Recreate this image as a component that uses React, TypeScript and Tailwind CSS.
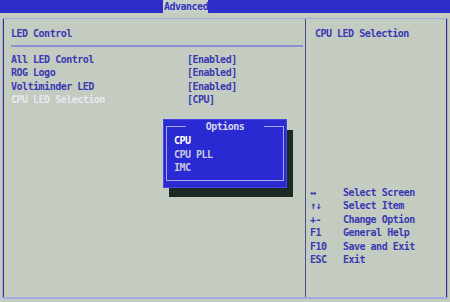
const items = [
  { label: "All LED Control", value: "[Enabled]" },
  { label: "ROG Logo", value: "[Enabled]" },
  { label: "Voltiminder LED", value: "[Enabled]" },
];

const help = [
  { key: "↔", desc: "Select Screen" },
  { key: "↑↓", desc: "Select Item" },
  { key: "+-", desc: "Change Option" },
  { key: "F1", desc: "General Help" },
  { key: "F10", desc: "Save and Exit" },
  { key: "ESC", desc: "Exit" },
];

export default function App() {
  return (
    <div
      className="relative w-[450px] h-[302px] overflow-hidden bg-[#c4cbc0] text-[10px] font-bold tracking-[-0.5px] text-[#3a3ab4]"
      style={{ fontFamily: '"DejaVu Sans Mono", "Liberation Mono", monospace' }}
    >
      {/* Top menu bar */}
      <div className="flex h-[13px] bg-[#2c2cc8]">
        <div className="ml-[163px] w-[45px] bg-[#c8cfc6] text-[#3434c0] leading-[13px] pl-[1px]">Advanced</div>
      </div>

      {/* Main frame */}
      <div className="mt-[5px] mx-[2px] h-[281px] border-t border-x border-b-2 border-[#a6aadc]">
        <div className="flex h-full border-x border-[#32327a]">
          {/* Left panel */}
          <div className="w-[302px] pl-[7px] pt-[8px] border-r border-[#4a4e7e]">
            <div className="leading-[13px]">LED Control</div>
            <div className="mt-[5px] mr-[2px] h-[2px] bg-[#8c8ed8]" />
            <div className="mt-[6px] leading-[13.4px]">
              {items.map((it) => (
                <div key={it.label} className="flex">
                  <span className="w-[176px]">{it.label}</span>
                  <span>{it.value}</span>
                </div>
              ))}
              <div className="flex">
                <span className="w-[176px] text-[#e6e8ee]">CPU LED Selection</span>
                <span>[CPU]</span>
              </div>
            </div>
          </div>

          {/* Right panel */}
          <div className="flex-1 flex flex-col pt-[8px]">
            <div className="pl-[9px] leading-[13px]">CPU LED Selection</div>
            <div className="mt-[146px] pl-[4px] leading-[13.4px]">
              {help.map((h) => (
                <div key={h.desc} className="flex">
                  <span className="w-[33px]">{h.key}</span>
                  <span>{h.desc}</span>
                </div>
              ))}
            </div>
          </div>
        </div>
      </div>

      {/* Options popup */}
      <div className="absolute left-[169px] top-[130px] w-[124px] h-[67px] bg-[#1e2a24]" />
      <div className="absolute left-[163px] top-[119px] w-[124px] h-[69px] bg-[#2a2ad2] border border-[#4848e0]">
        <div className="relative mt-[6px] mx-[2px] h-[55px] border border-[#a8a8f0]">
          <div className="absolute -top-[7px] left-0 right-0 flex justify-center">
            <span className="bg-[#2a2ad2] px-[20px] leading-[13px] text-[#d4d6ea]">Options</span>
          </div>
          <div className="pt-[7px] pl-[7px] leading-[13.5px]">
            <div className="text-white">CPU</div>
            <div className="text-[#c8cadc]">CPU PLL</div>
            <div className="text-[#c8cadc]">IMC</div>
          </div>
        </div>
      </div>
    </div>
  );
}
